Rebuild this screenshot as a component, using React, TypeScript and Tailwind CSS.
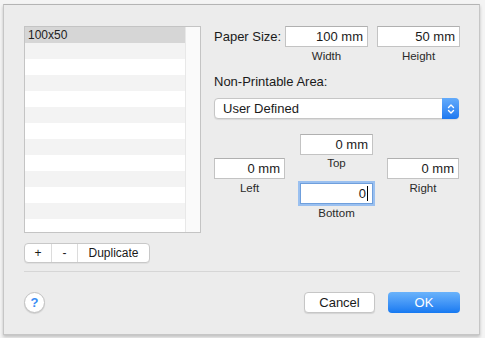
import React from "react";

const font = { fontFamily: '"Liberation Sans", Arial, sans-serif' };

function Field({ value, w, focused }: { value: React.ReactNode; w: string; focused?: boolean }) {
  if (focused) {
    return (
      <div className={`${w} h-[21px] bg-white border border-[#6f9fdc] shadow-[0_0_0_2px_#9ac0f0] flex items-center justify-end pr-[4px] text-[13px] text-[#1a1a1a]`}>
        <span>{value}</span>
        <span className="inline-block w-px h-[15px] bg-black ml-[1px]" />
      </div>
    );
  }
  return (
    <div className={`${w} h-[21px] bg-white border border-[#c3c3c3] border-t-[#b0b0b0] flex items-center justify-end pr-[4px] text-[13px] text-[#1a1a1a]`}>
      {value}
    </div>
  );
}

export default function App() {
  const rows = Array.from({ length: 13 }, (_, i) => i);
  return (
    <div style={font} className="w-[485px] h-[338px] bg-[#f4f4f4] overflow-hidden pt-[4px] pl-[3px]">
      <div className="w-[477px] h-[331px] bg-[#ececec] border border-[#c6c6c6] border-t-[#b4b4b4] shadow-[0_2px_3px_rgba(0,0,0,0.22)] pl-[20px] pt-[21px]">
        <div className="flex">
          {/* Left column */}
          <div className="w-[177px] flex flex-col">
            <div className="h-[207px] border border-[#c4c4c4] bg-white flex overflow-hidden">
              <div className="flex-1 flex flex-col">
                {rows.map((i) => (
                  <div
                    key={i}
                    className={`h-[16px] shrink-0 text-[12px] leading-[16px] pl-[3px] text-[#222] ${
                      i === 0 ? "bg-[#d6d6d6]" : i % 2 === 1 ? "bg-[#f3f3f3]" : "bg-white"
                    }`}
                  >
                    {i === 0 ? "100x50" : ""}
                  </div>
                ))}
              </div>
              <div className="w-[15px] bg-[#fafafa] border-l border-[#e8e8e8]" />
            </div>
            <div className="mt-[10px] w-[126px] h-[20px] bg-white border border-[#c8c8c8] rounded-[4px] flex text-[12px] text-[#1a1a1a] shadow-[0_1px_0_rgba(0,0,0,0.05)]">
              <div className="w-[27px] flex items-center justify-center border-r border-[#dcdcdc]">+</div>
              <div className="w-[26px] flex items-center justify-center border-r border-[#dcdcdc]">-</div>
              <div className="flex-1 flex items-center justify-center">Duplicate</div>
            </div>
          </div>

          {/* Right column */}
          <div className="ml-[13px] w-[246px] flex flex-col">
            <div className="flex items-center h-[21px]">
              <span className="w-[71px] text-[13px] text-[#1a1a1a]">Paper Size:</span>
              <Field value="100 mm" w="w-[83px]" />
              <div className="ml-[9px]">
                <Field value="50 mm" w="w-[83px]" />
              </div>
            </div>
            <div className="flex mt-[3px] text-[11.5px] leading-[13px] text-[#2a2a2a]">
              <span className="w-[71px]" />
              <span className="w-[83px] text-center">Width</span>
              <span className="ml-[9px] w-[83px] text-center">Height</span>
            </div>
            <div className="mt-[11px] text-[13px] leading-[16px] text-[#1a1a1a]">Non-Printable Area:</div>
            <div className="mt-[8px] w-[245px] h-[21px] bg-white border border-[#c6c6c6] rounded-[4px] flex shadow-[0_1px_1px_rgba(0,0,0,0.08)]">
              <div className="flex-1 flex items-center pl-[8px] text-[13px] text-[#1a1a1a]">User Defined</div>
              <div className="w-[17px] -my-px -mr-px rounded-r-[4px] bg-gradient-to-b from-[#63abfb] to-[#1c78f0] flex items-center justify-center">
                <svg width="8" height="12" viewBox="0 0 8 12" fill="none" stroke="white" strokeWidth="1.4" strokeLinecap="round" strokeLinejoin="round">
                  <path d="M1.5 4.5 L4 2 L6.5 4.5" />
                  <path d="M1.5 7.5 L4 10 L6.5 7.5" />
                </svg>
              </div>
            </div>

            <div className="mt-[15px] flex">
              <div className="w-[71px] pt-[24px] flex flex-col">
                <Field value="0 mm" w="w-[71px]" />
                <div className="mt-[2px] text-center text-[11.5px] leading-[14px] text-[#2a2a2a]">Left</div>
              </div>
              <div className="ml-[15px] w-[73px] flex flex-col">
                <Field value="0 mm" w="w-[73px]" />
                <div className="mt-[1px] text-center text-[11.5px] leading-[14px] text-[#2a2a2a]">Top</div>
                <div className="mt-[13px]">
                  <Field value="0" w="w-[73px]" focused />
                </div>
                <div className="mt-[2px] text-center text-[11.5px] leading-[14px] text-[#2a2a2a]">Bottom</div>
              </div>
              <div className="ml-[14px] w-[72px] pt-[24px] flex flex-col">
                <Field value="0 mm" w="w-[72px]" />
                <div className="mt-[2px] text-center text-[11.5px] leading-[14px] text-[#2a2a2a]">Right</div>
              </div>
            </div>
          </div>
        </div>

        <div className="mt-[8px] w-[436px] h-px bg-[#d6d6d6]" />

        <div className="mt-[20px] w-[436px] flex items-center">
          <div className="w-[21px] h-[21px] rounded-full bg-white border border-[#c2c2c2] shadow-[0_1px_1px_rgba(0,0,0,0.12)] flex items-center justify-center text-[13px] font-bold text-[#3a8cf4]">
            ?
          </div>
          <div className="flex-1" />
          <div className="w-[71px] h-[21px] bg-white border border-[#c6c6c6] rounded-[4px] shadow-[0_1px_1px_rgba(0,0,0,0.1)] flex items-center justify-center text-[13px] text-[#1a1a1a]">
            Cancel
          </div>
          <div className="ml-[13px] w-[72px] h-[21px] rounded-[4px] bg-gradient-to-b from-[#6ab3fb] to-[#1479f1] flex items-center justify-center text-[13px] text-white">
            OK
          </div>
        </div>
      </div>
    </div>
  );
}
